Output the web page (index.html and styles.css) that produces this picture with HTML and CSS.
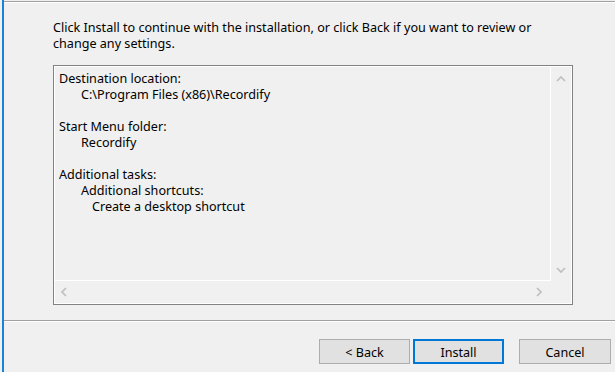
FILE: index.html
```html
<!DOCTYPE html>
<html lang="en">

<head>
    <meta charset="UTF-8">
    <title>Setup - Recordify</title>
    <link rel="stylesheet" href="styles.css">
</head>

<body>

    <div class="wizard">
        <div class="page">
            <p class="intro">Click Install to continue with the installation, or click Back if you want to review or change any settings.</p>

            <!-- Ready memo, read only -->
            <div class="memo">
                <div class="memo-text">
                    <div>Destination location:</div>
                    <div class="i1">C:\Program Files (x86)\Recordify</div>
                    <div class="blank"></div>
                    <div>Start Menu folder:</div>
                    <div class="i1">Recordify</div>
                    <div class="blank"></div>
                    <div>Additional tasks:</div>
                    <div class="i1">Additional shortcuts:</div>
                    <div class="i2">Create a desktop shortcut</div>
                </div>
                <div class="vscroll">
                    <span class="arrow-v"><svg width="10" height="6" viewBox="0 0 10 6"><polyline points="1,5 5,1 9,5" /></svg></span>
                    <span class="arrow-v"><svg width="10" height="6" viewBox="0 0 10 6"><polyline points="1,1 5,5 9,1" /></svg></span>
                </div>
                <div class="hscroll">
                    <span class="arrow-h"><svg width="6" height="10" viewBox="0 0 6 10"><polyline points="5,1 1,5 5,9" /></svg></span>
                    <span class="arrow-h"><svg width="6" height="10" viewBox="0 0 6 10"><polyline points="1,1 5,5 1,9" /></svg></span>
                </div>
                <div class="corner"></div>
            </div>
        </div>

        <div class="buttons">
            <button class="btn">&lt; Back</button>
            <button class="btn default">Install</button>
            <button class="btn cancel">Cancel</button>
        </div>
    </div>

</body>

</html>
```
FILE: styles.css
```css
* {
    box-sizing: border-box;
}

body {
    margin: 0;
    padding: 0;
    background-color: #f0f0f0;
    font-family: 'Noto Sans', sans-serif;
    font-size: 12.6px;
    color: #000;
}

.wizard {
    margin-left: 2px;
    height: 372px;
    border-left: 2px solid #1883d7;
    display: flex;
    flex-direction: column;
}

.page {
    margin-top: 1px;
    height: 319px;
    border-top: 1px solid #a0a0a0;
    box-shadow: inset 0 1px #fff;
    padding: 18px 0 0 49px;
}

.intro {
    margin: 0;
    width: 500px;
    line-height: 16px;
}

.memo {
    margin-top: 13px;
    width: 520px;
    height: 240px;
    border: 1px solid #828282;
    box-shadow: inset 0 0 0 1px #fff;
    padding: 1px;
    display: grid;
    grid-template-columns: 496px 20px;
    grid-template-rows: 214px 22px;
}

.memo-text {
    border-right: 1px solid #fff;
    border-bottom: 1px solid #fff;
    padding: 4px 0 0 4px;
    line-height: 16px;
    white-space: nowrap;
    overflow: hidden;
}

.memo-text .blank {
    height: 16px;
}

.memo-text .i1 {
    padding-left: 22px;
}

.memo-text .i2 {
    padding-left: 33px;
}

.vscroll {
    display: flex;
    flex-direction: column;
    justify-content: space-between;
}

.arrow-v {
    height: 23px;
    display: flex;
    align-items: center;
    justify-content: center;
}

.hscroll {
    display: flex;
    justify-content: space-between;
    padding-right: 3px;
}

.arrow-h {
    width: 18px;
    display: flex;
    align-items: center;
    justify-content: center;
}

.vscroll svg,
.hscroll svg {
    fill: none;
    stroke: #bfbfbf;
    stroke-width: 1.7;
}

.buttons {
    flex: 1;
    border-top: 1px solid #a0a0a0;
    box-shadow: inset 0 1px #fff;
    padding: 18px 4px 0 0;
    display: flex;
    justify-content: flex-end;
    align-items: flex-start;
}

.btn {
    width: 91px;
    height: 25px;
    margin-left: 3px;
    padding: 1px 0 0;
    background-color: #e1e1e1;
    border: 1px solid #adadad;
    font-family: inherit;
    font-size: inherit;
    color: #000;
}

.btn.default {
    border: 2px solid #0078d7;
}

.btn.cancel {
    width: 92px;
    margin-left: 15px;
}
```
